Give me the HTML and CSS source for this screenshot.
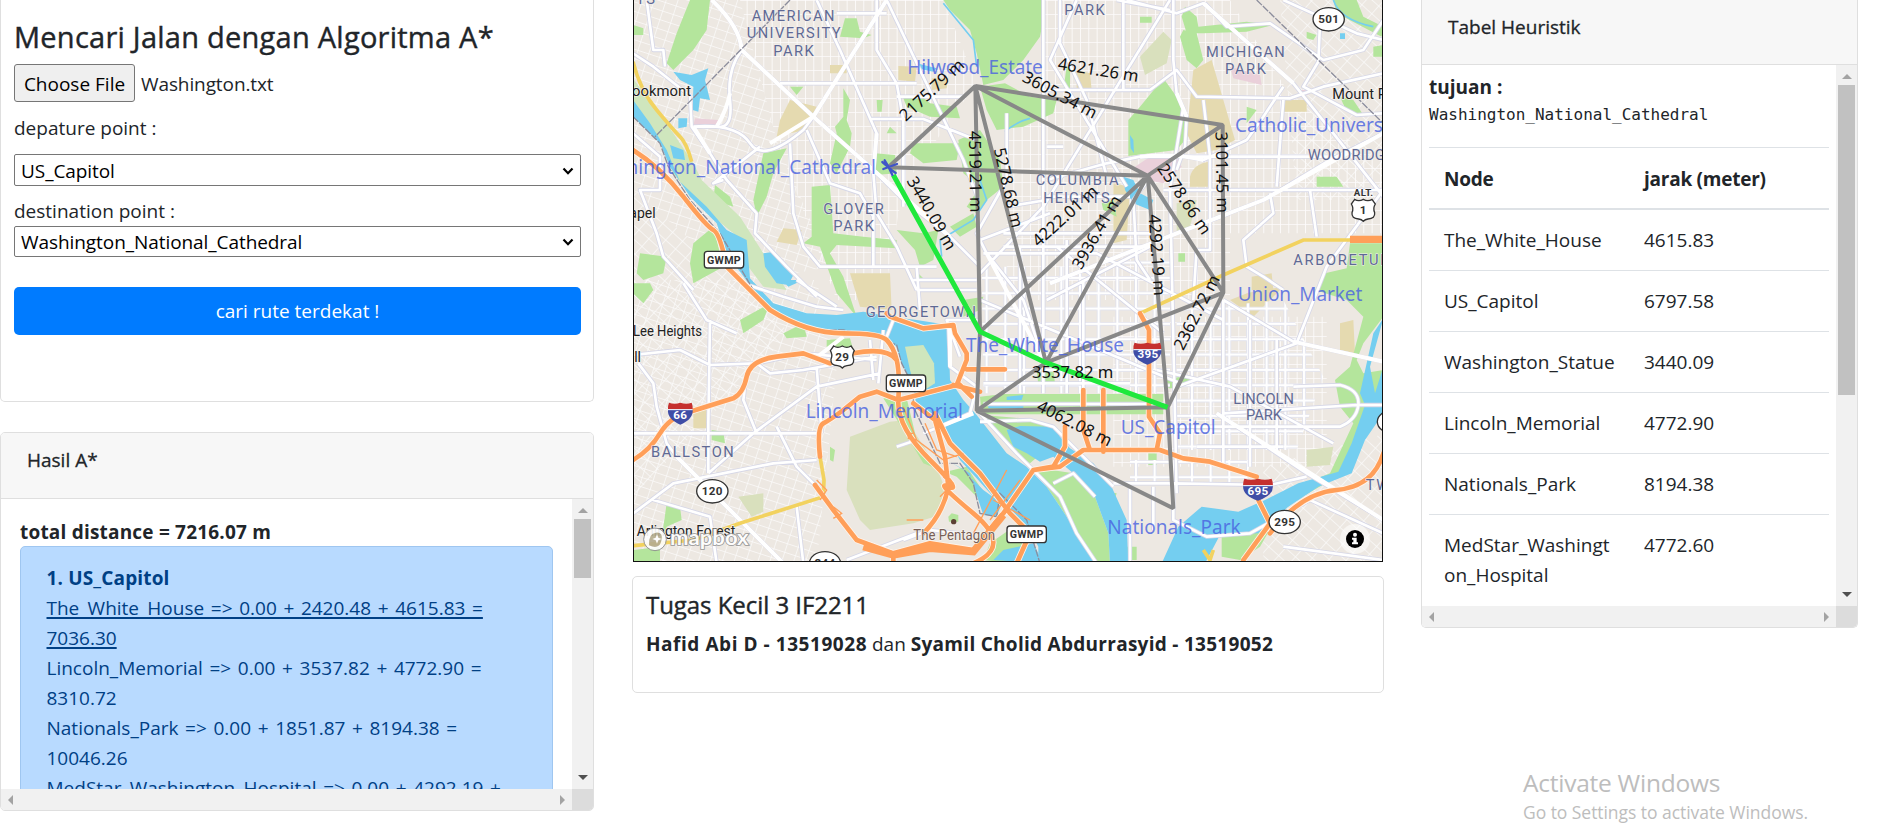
FILE: index.html
```html
<!DOCTYPE html>
<html lang="id">
<head>
<meta charset="utf-8">
<title>Algoritma A*</title>
<link rel="stylesheet" href="styles.css">
</head>
<body>
<main class="page">
  <section class="col col-left">
    <div class="card form-card">
      <h4 class="form-title">Mencari Jalan dengan Algoritma A*</h4>
      <div class="file-row"><span class="file-btn">Choose File</span><span class="file-name">Washington.txt</span></div>
      <div class="field-label">depature point :</div>
      <div class="select select-first"><span>US_Capitol</span><svg class="chev" viewBox="0 0 12 8"><path d="M1.5 1.5 6 6.2 10.5 1.5"/></svg></div>
      <div class="field-label second">destination point :</div>
      <div class="select"><span>Washington_National_Cathedral</span><svg class="chev" viewBox="0 0 12 8"><path d="M1.5 1.5 6 6.2 10.5 1.5"/></svg></div>
      <div class="btn">cari rute terdekat !</div>
    </div>
    <div class="card result-card">
      <div class="card-head result-head">Hasil A*</div>
      <div class="scroll-grid result-grid">
        <div class="view result-view">
          <b class="total">total distance = 7216.07 m</b>
          <div class="alert">
            <b>1. US_Capitol</b><br>
            <u>The_White_House =&gt; 0.00 + 2420.48 + 4615.83 =<br>7036.30</u><br>
            Lincoln_Memorial =&gt; 0.00 + 3537.82 + 4772.90 =<br>8310.72<br>
            Nationals_Park =&gt; 0.00 + 1851.87 + 8194.38 =<br>10046.26<br>
            MedStar_Washington_Hospital =&gt; 0.00 + 4292.19 +
          </div>
        </div>
        <div class="vbar"><i class="up"></i><span class="thumb thumb-short"></span><i class="down"></i></div>
        <div class="hbar"><i class="left"></i><i class="right"></i></div>
        <div class="corner"></div>
      </div>
    </div>
  </section>

  <section class="col col-mid">
    <div class="map">
      <svg class="map-svg" viewBox="12 0 2244 1683" preserveAspectRatio="none">
        <defs>
          <pattern id="g1" width="34" height="27" patternUnits="userSpaceOnUse" patternTransform="rotate(18)"><path d="M0 1H34M1 0V27" stroke="#fbfafa" stroke-width="2.4" fill="none"/></pattern>
          <pattern id="g2" width="25" height="42" patternUnits="userSpaceOnUse"><path d="M0 1H25M1 0V42" stroke="#fdfcfc" stroke-width="3" fill="none"/></pattern>
          <pattern id="g3" width="56" height="46" patternUnits="userSpaceOnUse"><path d="M0 6H56M6 0V46" stroke="#dadbe9" stroke-width="11" fill="none"/><path d="M0 6H56M6 0V46" stroke="#fff" stroke-width="7" fill="none"/></pattern>
          <pattern id="g4" width="31" height="40" patternUnits="userSpaceOnUse" patternTransform="rotate(-48)"><path d="M0 1H31M1 0V40" stroke="#fbfafa" stroke-width="2.4" fill="none"/></pattern>
          <g id="gwmp"><rect x="-59" y="-25" width="118" height="50" rx="9" fill="#fff" stroke="#333" stroke-width="4"/><text class="sh" y="12" textLength="102" lengthAdjust="spacingAndGlyphs">GWMP</text></g>
          <g id="oval"><ellipse rx="47" ry="35" fill="#fff" stroke="#333" stroke-width="4"/></g>
          <g id="us"><path d="M-26-32Q-14-24 0-32Q14-24 26-32L36-18Q28-6 34 8Q36 26 14 27Q5 28 0 34Q-5 28-14 27Q-36 26-34 8Q-28-6-36-18Z" fill="#fff" stroke="#333" stroke-width="4"/></g>
          <g id="is"><path d="M-34-32Q-18-26 0-32Q18-26 34-32Q38-22 37-12H-37Q-38-22-34-32Z" fill="#c5302e"/><path d="M-37-12H37Q40 18 0 34Q-40 18-37-12Z" fill="#3f4da6"/><path d="M-37-11H37" stroke="#fff" stroke-width="3"/></g>
        </defs>

        <rect class="land" x="0" y="0" width="2270" height="1690"/>
        <path fill="url(#g1)" d="M0 0H330L440 420 600 800 330 850 0 560ZM0 840H560L620 1100 560 1690H0Z"/>
        <path fill="url(#g4)" d="M0 560 330 850 480 1000 0 1500ZM1950 0H2270V600H2000ZM1900 1400 2270 1300V1690H1900Z"/>
        <path fill="url(#g2)" d="M330 0H940L1040 250 820 560 760 900H620L440 420ZM1130 300H1800V900H1130ZM1240 0H1800L1990 300 2270 500V700H1240ZM1450 950H2090V1400H1450Z"/>

        <g class="sand">
          <path d="M480 300 560 320 530 390 480 400 440 410 450 360ZM600 195H650V220H600ZM805 198 860 200 855 245 805 240ZM905 235 955 235 950 265 905 270ZM460 685 515 690 500 735 440 725ZM660 820 780 820 785 930 690 920Z"/>
          <path d="M1690 210 1745 180 1815 420 1760 450 1700 460 1670 400ZM1680 530Q1690 490 1740 485L1745 560H1680ZM1340 210 1380 220 1385 270 1340 270ZM1450 550 1500 560 1490 720 1450 730ZM1855 878 1900 870 1960 860 1870 950 1800 900ZM2130 970 2170 960 2175 1060 2130 1050ZM1955 300H2030V335H1955ZM1865 830 1925 820 1930 870 1865 870ZM190 1220H230V1285H190Z"/>
        </g>
        <path class="pink" d="M1515 500 1560 470 1640 475 1655 500 1600 550 1550 540ZM1800 200 1890 225 1895 255 1810 235ZM195 355 265 360 255 380 190 378ZM2015 270H2035V285H2015Z"/>
        <path class="cem" d="M660 1310 780 1265 830 1260 920 1400 950 1480 930 1545 850 1570 720 1590 690 1560 650 1470ZM1530 170 1600 95 1625 120 1610 190 1545 225ZM325 1490 400 1480 400 1535 365 1550ZM1640 610 1700 600 1680 680 1640 700ZM2030 1350 2110 1340 2100 1395 2030 1400Z"/>

        <g class="park">
          <path d="M180 0H240L230 90 190 150 130 210 110 190 140 100ZM9 75 40 85 40 105 9 105ZM645 55 680 55 690 95 725 105 700 115 630 110ZM640 265 660 300 650 360 665 400 660 440 620 520 600 490 620 400 615 380 640 350ZM480 260 520 260 500 285ZM740 300 758 300 755 335 742 335Z"/>
          <path d="M400 460 470 445 430 520 410 590 380 650 370 600ZM255 555 300 590 310 620 250 600ZM190 730 250 680 270 760 280 800 190 850 180 790ZM30 760 110 770 100 820 40 840 20 820ZM9 850H60L70 870 40 910 9 880ZM545 560 600 555 610 700 700 710 800 720V745L620 735 600 760 640 830 680 950 620 880 570 740 520 730 545 710Z"/>
          <path d="M820 295 870 285 900 310 980 320 990 355 900 350 830 320ZM850 430 990 430 980 480 880 490 840 460ZM735 460 795 465 800 520 735 525ZM985 420 1050 390 1110 480 1120 560 1070 600 1040 640 1010 620 1050 560 1000 520ZM940 0H1060L1055 30H1245L1230 110 1180 180 1120 240 1060 255 1040 160 1020 90 960 30ZM1050 0H1245V60H1050ZM1050 260 1125 250 1200 290 1280 300 1270 340 1180 380 1100 390 1070 330ZM800 690 880 700 925 690 910 780 870 800 855 750ZM960 680 1030 640 1040 680 990 710ZM860 815 885 840 860 840ZM770 400 780 380 800 400Z"/>
          <path d="M1495 360 1530 320 1600 235 1640 290 1665 350 1665 420 1640 450 1560 460 1495 468ZM1660 90 1700 100 1720 180 1700 205 1670 180 1650 110ZM1665 20 1700 50 1705 80 1850 65 1930 75 1850 95 1720 100 1670 100 1655 50ZM1530 50H1565V68H1530ZM1850 320 1880 330 1850 370ZM2110 0H2180L2200 50 2260 80 2255 110 2120 40ZM2130 290 2170 300 2200 345 2150 335ZM2060 530 2120 530 2140 560 2060 560ZM2030 95 2060 105 2050 120 2030 115ZM1415 610 1450 600 1460 650 1420 630ZM1645 760H1665V785H1645ZM2230 140 2260 135V170H2230ZM1310 200H1320V270H1300Z"/>
          <path d="M2160 730H2260V950L2200 1030 2180 1080 2200 1120 2260 1110V1200L2180 1320 2120 1430 2000 1500 1920 1560 1880 1600 1900 1540 2000 1460 2100 1420 2170 1270 2130 1220 2115 1140 2160 1100 2200 950 2150 900 2055 870 2085 820 2150 805Z"/>
          <path d="M1058 1245 1180 1255 1280 1290 1280 1320 1200 1390 1160 1360ZM1200 1400 1330 1420 1395 1490 1435 1600 1440 1690 1390 1690 1330 1580 1250 1460ZM1220 1110H1270L1275 1150 1225 1155ZM1610 1140 1650 1130 1690 1130 1650 1165 1615 1165ZM1775 1580 1850 1600 1930 1570 1890 1640 1830 1680 1775 1670ZM1000 950 1050 930 1060 890 1000 900ZM330 960 420 910 400 960 340 1000ZM460 1000 520 970 530 1010 470 1015ZM590 1020 660 1015 670 1050 590 1045ZM245 1290 280 1295 285 1330 245 1320ZM110 1510 150 1520 155 1560 110 1580 90 1640 100 1580ZM9 1650 90 1640 90 1690H9ZM600 1340 615 1350 610 1385 600 1380ZM1060 1680 1080 1630 1180 1560 1210 1600 1150 1690ZM760 1195 830 1195 860 1320 930 1420 1010 1400 1070 1490 1040 1490 980 1430 880 1390 820 1290ZM1490 1640H1520V1680H1490ZM1430 1475 1460 1480 1450 1510 1425 1500ZM1555 1360H1580V1395H1555Z"/>
        </g>

        <g class="wet">
          <path d="M9 235 80 330 130 400 190 490 215 540 330 650 400 760 470 870 400 860 340 780 310 700 200 610 130 520 90 420 9 310Z"/>
        </g>
        <path fill="url(#g3)" d="M1055 800H1430L1620 750V1180H1060ZM1640 930 1960 900 2080 1130 2000 1350H1640ZM1500 1380H1860L1850 1450H1500Z"/>
        <path class="park" d="M1120 1182H1600V1243H1055L1050 1190Z"/>
        <g class="water">
          <path d="M9 350 90 430 120 500 180 590 260 670 290 760 370 870 430 930 530 985 640 1000 760 1015 800 1040 815 1090 850 1160 860 1220 940 1290 990 1380 1090 1490 1150 1540 1200 1590 1225 1640 1225 1690H1395L1330 1580 1250 1460 1190 1400 1130 1360 1040 1245 1000 1200 960 1140 955 975 860 960 780 950 700 935 620 945 530 940 430 910 360 835 350 720 290 690 230 620 150 545 110 450 60 370 9 300Z"/>
          <path d="M960 1385 1020 1420 1045 1500 1060 1545 1100 1550 1115 1510 1060 1470 1000 1410ZM1130 1290 1170 1278 1270 1280 1290 1310 1320 1345 1390 1390 1440 1450 1490 1560 1495 1690H1440L1435 1600 1395 1490 1330 1420 1270 1370 1230 1385 1190 1360 1150 1340ZM1090 1680 1120 1650 1210 1630 1240 1690ZM1075 1215H1180V1225H1075ZM1130 1190 1180 1185 1175 1200H1130Z"/>
          <path d="M2260 955 2230 1000 2190 1180 2205 1215 2165 1330 2125 1415 2005 1450 1905 1500 1825 1535 1715 1520 1645 1580 1595 1690H1725L1770 1605 1885 1600 1975 1520 2065 1460 2165 1420 2205 1320 2260 1240V1100L2235 1180 2220 1100Z"/>
          <path d="M130 215 185 225 235 205 225 240 240 300 210 295 205 335 188 330 190 260 150 240ZM145 355 172 355 170 380 145 385ZM400 760 435 755 490 825 475 855 440 850 405 800ZM120 435 160 450 165 480 130 475ZM455 840 520 840 475 860ZM1480 530 1510 540 1530 580 1570 600 1560 630 1510 610 1485 570ZM1500 405 1510 420 1512 460 1502 445ZM860 190 920 205 910 215 860 205ZM2130 100H2145V117H2130Z"/>
          <path class="creek" d="M940 10 1030 120 1040 200M1050 540 1070 600 1030 660 930 720 935 770M1125 395Q1160 365 1200 355M2110 0Q2130 60 2230 80"/>
        </g>
        <path class="wet" d="M825 1040 880 1035 912 1090 915 1150 860 1185 840 1110Z"/>

        <g class="casing"><g id="rd">
          <path d="M245 0Q330 80 335 150L550 350 730 510 820 600 960 710 1050 800M335 150Q290 210 300 300T260 380H190M190 380Q320 370 360 430T520 390L550 350 650 190 770 0M180 280 185 380 240 460 290 540 380 640 375 700 470 800 560 890M560 0 630 150 740 400 730 520 740 640 800 740 860 870M770 0 870 210 1000 480 1045 600M740 0 740 150 800 250 820 360V620M620 40H770M450 250H860M720 357H880L1040 420M800 290H1000M530 390 600 550 690 580 730 650M480 430 490 640 520 740 570 800H920M730 640V800M570 800H730L860 800 870 930M390 440 250 550 280 540M9 400 90 470 90 570 30 570 80 700 100 770 190 870M9 160 70 200 170 280M50 0 70 150 100 150 105 200M10 1065 150 1050 240 1095 380 1090 520 1060 740 1080M25 1090 70 1150 80 1220 110 1330 140 1370 460 1690M10 1300H250L560 1300M240 960 235 1270 235 1420M235 1420 370 1300 560 1160 750 1120M10 1540 130 1450 430 1390 560 1380M440 1280 500 1400 580 1480M70 1500 240 1550 260 1690M500 1520 520 1690M380 1090 420 1120 520 1110 740 1070M560 1100 575 1300M650 1680 860 1600M160 850 230 960 320 1000M340 850 460 890 560 920 640 930M500 840 620 920M720 1020 730 1140M760 990 745 1150M800 1340 860 1320M380 1300 340 1200 350 1120M850 840H1040M860 870H1040M1050 960H950L990 1070"/>
          <path d="M1240 0V780M1290 0 1290 130 1370 300 1430 530M1340 0 1260 180 1490 560M1480 0V270M1620 0 1240 620 1050 820M1630 0V180L1640 280 1670 350 1665 440 1640 510M1245 270H1560L1640 210 1700 290 1980 295 2080 260 2260 220M1490 0 1640 40 1720 10 1990 250 2110 400 2260 590M1460 0 1620 30M1530 470Q1640 460 1720 480L1850 420 1900 350 1960 260M1250 540 1430 490 1530 470M1300 440 1250 440M1725 10 1790 80 1920 70 2080 180 2200 150 2260 60M1960 0 2180 100 2260 120M2070 70 2065 185 2020 260 2180 345 2260 340M1600 570H2260M1260 850 1640 700 1900 600 2100 480 2260 400M1530 470H2110M1720 300 1740 470 1740 750H1700L1690 900M1640 700 1800 640M1920 580 1930 640 1840 720 1850 800 1900 830 1960 870M1660 320 1620 570M1960 300 1940 560M2040 570 2060 710M2260 570 2090 800 2000 1030 1640 1160M1555 540 1510 600 1520 780 1560 840M1250 590H1500M1130 620 1250 600M1050 720 1260 640M1060 760H1400L1780 960M1050 900 1650 1150M1280 740 1600 1000M1560 740 1250 900M1620 560 1640 1480M1130 340 1130 540 1040 700 1070 760 1180 900 1240 1080M1170 740V1180M1240 720V1180M1310 720V1180M1360 840V1180M1120 700H1560M1120 740H1560"/>
          <path d="M1780 900V1400M1860 960V1400M1940 1020V1350M1580 1110 1800 1160 2110 1330M1760 1240 1880 1320 2030 1420 2260 1560M1640 1280H2130Q2180 1260 2185 1215T2130 1155L1990 1160M1780 1240 2180 1215H2260M1780 900 1990 1025 2260 1085M1450 1450H1630L1920 1455 2030 1430M1050 1240 1160 1360 1200 1400 1290 1490 1340 1600 1400 1690M1050 1265 1200 1260 1270 1280 1330 1340 1450 1460M1630 1450V1560L1730 1610 1860 1600 2040 1500M1500 1460V1690M1570 1460V1590M1960 1640 2260 1680M2040 1500 2260 1600M880 1300 930 1280 1020 1240 1040 1160 960 1100 955 970M1060 1150H1500M820 1620 900 1590 990 1600M1270 1450 1330 1420 1395 1490M770 1010 790 960M1700 1340H1960M1060 1212H1600"/>
        </g></g>
        <use href="#rd" class="road-fill"/>
        <g class="major"><path d="M245 0Q330 80 335 150L550 350 730 510 960 710M770 0 650 190 550 350M300 280Q290 330 260 380M190 380 240 460M420 430 550 350M740 400 730 520M1640 280 1670 350M1530 470Q1640 460 1720 480M1720 10 1990 250M1260 850 1640 700 1900 600 2260 400M2260 1085 1990 1025M1760 1240 2260 1560M140 1370 460 1690M960 970V1100M930 1280 1030 1240M1070 760 1240 1080M550 1080 640 1010"/></g>

        <path class="rail" d="M480 0 75 410M1880 0 2260 370M9 350 90 430 115 500 180 600 270 700 370 870 450 950 530 990 640 990 740 1010 800 1035 815 1090 850 1160 850 1220 930 1390 990 1390 1030 1450 1050 1540 1100 1550 1110 1480 1190 1560 1230 1690"/>

        <g class="yellow"><path d="M9 185Q30 270 80 330T150 410 185 485M9 1637 190 1620 330 1570 580 1490 582 1440 570 1370M1530 940 1780 825 2020 720H2160M1720 1650 1740 1680 1750 1650"/></g>
        <g class="hwy-halo"><path id="hw" d="M9 450Q90 500 160 590T250 690 290 800L420 930Q530 1000 640 1000T770 1020 800 1080 805 1200 900 1380 955 1460 1030 1540 1030 1690M9 1380Q60 1350 90 1300T180 1235L310 1195Q340 1180 350 1130T440 1070L520 1060 600 1090M670 1060Q770 1040 800 1080M570 1370Q560 1280 580 1270T640 1230L690 1190 740 1175 805 1200 980 1155 1010 1080 1010 1060 975 1000 970 975 880 985 780 950 770 940M1010 1108H1125M970 1155 1050 1175M985 1150 1025 1190M555 1455 610 1530 680 1620 790 1660 900 1630 1030 1650 1120 1540 1210 1410 1290 1400 1360 1350 1590 1350 1660 1375 1740 1385 1880 1430M880 1600Q940 1540 955 1460L945 1370 915 1260 850 1210M915 1240 960 1330 1050 1420 1140 1540 1200 1600 1160 1690M1530 940 1557 990V1250L1590 1300 1580 1350M1360 1170V1290L1378 1345M1420 1170V1355M1305 1280V1340L1270 1400 1210 1410M1885 1500 1920 1570 1840 1680M1920 1600Q2010 1480 2120 1470T2260 1360M790 1660V1690"/></g>
        <use href="#hw" class="hwy"/>
        <path class="orange-thick" d="M700 1640 790 1665 900 1645 1030 1655 1120 1545M2160 718H2260"/>
        <path class="ramp" d="M850 1300H835V1315L860 1320M820 1220 860 1320 940 1380 1000 1360M885 1270 920 1350 980 1370M940 1430 970 1450 930 1490M560 1440 590 1470 570 1500M610 1520 635 1540 610 1555M880 1560H830M1090 1500 1200 1560M1130 1410 1030 1600M1170 1440 1080 1560"/>

        <g class="area">
          <text x="80" y="12" text-anchor="end">HEIGHTS</text>
          <text x="365" y="62" textLength="253">AMERICAN</text><text x="350" y="115" textLength="287">UNIVERSITY</text><text x="430" y="168" textLength="126">PARK</text>
          <text x="580" y="642" textLength="186">GLOVER</text><text x="610" y="694" textLength="127">PARK</text>
          <text x="1303" y="45" textLength="126">PARK</text>
          <text x="1728" y="170" textLength="241">MICHIGAN</text><text x="1785" y="222" textLength="128">PARK</text>
          <text x="2033" y="480" textLength="262">WOODRIDGE</text><text x="1990" y="796">ARBORETUM</text>
          <text x="1217" y="555" textLength="254">COLUMBIA</text><text x="1240" y="608" textLength="204">HEIGHTS</text>
          <text x="707" y="951" textLength="336">GEORGETOWN</text><text x="63" y="1371" textLength="253">BALLSTON</text>
          <text x="1810" y="1212" textLength="187">LINCOLN</text><text x="1848" y="1260" textLength="113">PARK</text><text x="2207" y="1470">TWINING</text>
        </g>
        <g class="town">
          <text x="183" y="287" text-anchor="end" textLength="219" lengthAdjust="spacingAndGlyphs">Brookmont</text><text x="77" y="655" text-anchor="end">Chapel</text>
          <text x="9" y="1008" textLength="207" lengthAdjust="spacingAndGlyphs">Lee Heights</text><text x="33" y="1085" text-anchor="end">Falls Hill</text>
          <text x="20" y="1608" textLength="296" lengthAdjust="spacingAndGlyphs">Arlington Forest</text><text x="2107" y="296" textLength="270" lengthAdjust="spacingAndGlyphs">Mount Rainier</text>
          <text x="850" y="1620" class="brown" textLength="245" lengthAdjust="spacingAndGlyphs">The Pentagon</text>
        </g>
        <path class="park" d="M955 1550 965 1540 985 1545 985 1565H957Z"/><circle cx="971" cy="1565" r="8" fill="#5c4033"/>

        <use href="#gwmp" x="282" y="779"/><use href="#gwmp" x="828" y="1150"/><use href="#gwmp" x="1190" y="1603"/>
        <use href="#oval" x="2096" y="58"/><text class="sh" x="2096" y="70">501</text>
        <use href="#oval" x="247" y="1474"/><text class="sh" x="247" y="1486">120</text>
        <use href="#oval" x="1964" y="1566"/><text class="sh" x="1964" y="1578">295</text>
        <use href="#oval" x="585" y="1690"/><text class="sh" x="585" y="1702">244</text>
        <use href="#oval" x="2289" y="1265"/>
        <use href="#us" x="637" y="1070"/><text class="sh" x="637" y="1083">29</text>
        <use href="#us" x="2200" y="630"/><text class="sh" x="2200" y="642">1</text><text class="sh alt" x="2201" y="587">ALT.</text>
        <use href="#is" x="151" y="1240"/><text class="sh w" x="151" y="1256">66</text>
        <g transform="translate(1884 1468) scale(1.2 1)"><use href="#is"/></g><text class="sh w" x="1884" y="1485">695</text>

        <path class="edge" d="M1036 258 775 502 1553 527ZM1036 258 1050 995 1040 1232 1613 1222 1630 1525 1040 1232M1036 258 1248 1088 1780 878 1778 375 1036 258M1778 375 1553 527 1780 878 1613 1222 1553 527 1050 995M1553 527 1248 1088 1040 1232"/>
        <g transform="translate(1552 1060) scale(1.13 1)"><use href="#is"/></g>
        <text class="sh w" x="1554" y="1075">395</text>
        <path class="route" d="M790 525 1050 995 1248 1088 1613 1222"/>
        <path class="plane" d="M757 486 786 511M801 492 760 507M786 511 797 519M777 503 787 525M764 481 777 503"/>

        <g class="node">
          <text x="832" y="222" textLength="406">Hilwood_Estate</text><text x="738" y="522" text-anchor="end">Washington_National_Cathedral</text>
          <text x="1815" y="397">Catholic_University</text><text x="1823" y="902" textLength="374">Union_Market</text>
          <text x="1008" y="1055" textLength="474">The_White_House</text><text x="527" y="1255" textLength="472">Lincoln_Memorial</text>
          <text x="1472" y="1302" textLength="285">US_Capitol</text><text x="1432" y="1602" textLength="400">Nationals_Park</text>
        </g>
        <g class="dist">
          <text transform="translate(905 270) rotate(-43)" y="17">2175.79 m</text>
          <text transform="translate(905 640) rotate(60)" y="17">3440.09 m</text>
          <text transform="translate(1036 515) rotate(89)" y="17">4519.21 m</text>
          <text transform="translate(1135 563) rotate(77)" y="17">5278.68 m</text>
          <text transform="translate(1405 210) rotate(9)" y="17">4621.26 m</text>
          <text transform="translate(1290 285) rotate(28)" y="17">3605.34 m</text>
          <text transform="translate(1776 517) rotate(89)" y="17">3101.45 m</text>
          <text transform="translate(1663 597) rotate(56)" y="17">2578.66 m</text>
          <text transform="translate(1305 648) rotate(-42)" y="17">4222.01 m</text>
          <text transform="translate(1400 697) rotate(-60)" y="17">3936.41 m</text>
          <text transform="translate(1581 765) rotate(86)" y="17">4292.19 m</text>
          <text transform="translate(1700 937) rotate(-63)" y="17">2362.72 m</text>
          <text transform="translate(1328 1118)" y="17">3537.82 m</text>
          <text transform="translate(1334 1270) rotate(27)" y="17">4062.08 m</text>
        </g>
        <g class="logo"><circle cx="75" cy="1618" r="34"/><path d="M57 1636Q55 1600 78 1598T94 1623 57 1636Z" class="hole"/><path d="M81 1603 85 1613 95 1617 85 1621 81 1631 77 1621 67 1617 77 1613Z" class="star"/><text x="120" y="1636" textLength="236" lengthAdjust="spacingAndGlyphs">mapbox</text></g>
        <circle cx="2175" cy="1617" r="45" fill="#fff" opacity=".55"/><circle cx="2175" cy="1617" r="27"/><circle cx="2175" cy="1604" r="6" fill="#fff"/><path d="M2166 1613H2180V1627H2184V1633H2166V1627H2170V1619H2166Z" fill="#fff"/>
      </svg>
    </div>
    <div class="card team-card">
      <h5 class="team-title">Tugas Kecil 3 IF2211</h5>
      <div class="team"><b class="first">Hafid Abi D - 13519028</b> dan <b>Syamil Cholid Abdurrasyid - 13519052</b></div>
    </div>
  </section>

  <section class="col col-right">
    <div class="card table-card">
      <div class="card-head table-head">Tabel Heuristik</div>
      <div class="scroll-grid table-grid">
        <div class="view table-view">
          <b class="goal">tujuan :</b>
          <code class="goal-name">Washington_National_Cathedral</code>
          <div class="row head"><b>Node</b><b>jarak (meter)</b></div>
          <div class="row"><span>The_White_House</span><span>4615.83</span></div>
          <div class="row"><span>US_Capitol</span><span>6797.58</span></div>
          <div class="row"><span>Washington_Statue</span><span>3440.09</span></div>
          <div class="row"><span>Lincoln_Memorial</span><span>4772.90</span></div>
          <div class="row"><span>Nationals_Park</span><span>8194.38</span></div>
          <div class="row last"><span>MedStar_Washingt<br>on_Hospital</span><span>4772.60</span></div>
        </div>
        <div class="vbar"><i class="up"></i><span class="thumb thumb-long"></span><i class="down"></i></div>
        <div class="hbar"><i class="left"></i><i class="right"></i></div>
        <div class="corner"></div>
      </div>
    </div>
  </section>
</main>
<div class="watermark"><div class="wm-title">Activate Windows</div><div class="wm-text">Go to Settings to activate Windows.</div></div>
</body>
</html>
```
FILE: styles.css
```css
* { box-sizing: border-box; }
body { margin: 0; height: 835px; overflow: hidden; background: #fff; color: #212529; font: 19px/30px "Open Sans", "Noto Sans", sans-serif; }
.page { display: flex; align-items: flex-start; }
.col-left { width: 594px; }
.col-mid { width: 752px; margin-left: 38px; }
.col-right { width: 437px; margin-left: 37px; }
.card { border: 1px solid #dfdfdf; border-radius: 5px; background: #fff; overflow: hidden; white-space: nowrap; }
b { font-weight: 700; }

.form-card { height: 402px; border-top: 0; border-radius: 0 0 5px 5px; padding: 19px 12px 0 13px; }
.form-title { margin: 0; font-size: 29px; font-weight: 500; line-height: 36px; letter-spacing: .25px; -webkit-text-stroke: .4px #212529; }
.file-row { display: flex; align-items: center; gap: 6px; height: 38px; margin-top: 9px; }
.file-btn { width: 121px; height: 38px; line-height: 38px; text-align: center; border: 1px solid #767676; border-radius: 3px; background: #efefef; color: #000; }
.file-name { padding-top: 1px; letter-spacing: -.1px; }
.field-label { margin-top: 11px; }
.field-label.second { margin-top: 10px; }
.select { display: flex; align-items: center; justify-content: space-between; height: 31px; padding: 1px 6px 0; border: 1px solid #767676; border-radius: 2px; color: #000; letter-spacing: -.07px; }
.select-first { height: 32px; margin-top: 11px; }
.chev { width: 12px; height: 8px; fill: none; stroke: #000; stroke-width: 2.2; }
.btn { height: 48px; margin-top: 30px; border-radius: 5px; background: #007bff; color: #fff; line-height: 49px; text-align: center; }

.card-head { background: #f7f7f7; border-bottom: 1px solid #dfdfdf; -webkit-text-stroke: .3px #212529; }
.result-card { margin-top: 30px; height: 379px; }
.result-head { height: 66px; padding: 12px 26px; line-height: 30px; }
.scroll-grid { display: grid; grid-template-rows: 1fr 21px; }
.result-grid { height: 311px; grid-template-columns: 1fr 21px; }
.table-grid { height: 562px; grid-template-columns: 1fr 21px; }
.view { overflow: hidden; min-width: 0; }
.result-view { padding: 18px 19px 0 19px; }
.total { display: block; letter-spacing: .2px; }
.alert { height: 400px; margin-top: -1px; padding: 16px 25.5px; border: 1px solid #9fc6f0; border-radius: 5px; background: #b8daff; color: #004085; word-spacing: 1.7px; }
.alert b { letter-spacing: .15px; word-spacing: 0; }
.alert u { text-underline-offset: 2px; text-decoration-thickness: 2px; }
.vbar { display: flex; flex-direction: column; align-items: center; background: #f1f1f1; }
.hbar { display: flex; align-items: center; justify-content: space-between; padding: 0 8px; background: #f1f1f1; }
.corner { background: #dcdcdc; }
.thumb { width: 17px; margin-top: 6px; background: #c1c1c1; }
.thumb-short { height: 59px; }
.thumb-long { height: 310px; }
.vbar i, .hbar i { width: 0; height: 0; border: 5px solid transparent; }
.up { margin-top: 4px; border-bottom-color: #a3a3a3 !important; }
.down { margin-top: auto; margin-bottom: 4px; border-top-color: #505050 !important; }
.hbar .left { margin-left: -6px; border-right-color: #a3a3a3; }
.hbar .right { margin-right: -6px; border-left-color: #a3a3a3; }

.map { height: 562px; margin: 0 1px; border: 1px solid #111; border-top: 0; overflow: hidden; }
.map-svg { display: block; width: 748px; height: 561px; }
.land { fill: #ede8e2; }
.sand { fill: #e5dab0; }
.pink { fill: #ead0da; }
.cem { fill: #d9e0bd; }
.park { fill: #b4e59c; }
.wet { fill: #cfe6bd; }
.water { fill: #74cef0; }
.creek { fill: none; stroke: #74cef0; stroke-width: 5; }
.casing { fill: none; stroke: #d6d7e7; stroke-width: 13; stroke-linejoin: round; }
.road-fill { fill: none; stroke: #fff; stroke-width: 8; stroke-linejoin: round; }
.major { fill: none; stroke: #fff; stroke-width: 12; stroke-linejoin: round; }
.rail { fill: none; stroke: #8c8d9c; stroke-width: 4; stroke-dasharray: 22 4; }
.yellow { fill: none; stroke: #f2d25f; stroke-width: 11; }
.hwy { fill: none; stroke: #ff9f59; stroke-width: 14; stroke-linejoin: round; stroke-linecap: round; }
.hwy-halo { fill: none; stroke: #fff3ea; stroke-width: 19; stroke-linejoin: round; }
.orange-thick { fill: none; stroke: #ff9f59; stroke-width: 22; }
.ramp { fill: none; stroke: #ff9f59; stroke-width: 4; }
.edge { fill: none; stroke: #888; stroke-width: 12; stroke-linejoin: bevel; }
.route { fill: none; stroke: #1fe83c; stroke-width: 15; }
.plane { fill: none; stroke: #4054c8; stroke-width: 7; stroke-linecap: round; }
.area { font: 400 44px Roboto, sans-serif; fill: #5f6994; letter-spacing: 5px; stroke: #f3f0ee; stroke-width: 3; paint-order: stroke; }
.town { font: 400 42px Roboto, sans-serif; fill: #222; stroke: #f6f3f0; stroke-width: 4; paint-order: stroke; }
.brown { fill: #785f56; }
.sh { font: 700 35px Roboto, sans-serif; fill: #333; text-anchor: middle; letter-spacing: 1px; }
.alt { font-size: 29px; stroke: #fff; stroke-width: 3; paint-order: stroke; }
.w { fill: #fff; }
.node { font: 57px "Noto Sans", sans-serif; fill: #4a63e0; fill-opacity: .82; }
.dist { font: 50px "Noto Sans", sans-serif; fill: #111; text-anchor: middle; }
.logo { fill: #fff; stroke: #8c8c8c; stroke-width: 3; opacity: .9; }
.logo text { font: 700 64px Lato, sans-serif; paint-order: stroke; stroke-width: 5; }
.logo .hole { fill: #b5ad8f; stroke: none; }
.logo .star { stroke: none; }

.team-card { height: 117px; margin-top: 14px; padding: 13px 13px; }
.team-title { margin: 0; font-size: 24px; font-weight: 400; line-height: 30px; letter-spacing: -.05px; -webkit-text-stroke: .4px #212529; }
.team { margin-top: 9px; }
.team b { letter-spacing: .28px; }
.team .first { letter-spacing: .55px; }

.table-card { height: 628px; border-top: 0; border-radius: 0 0 5px 5px; }
.table-head { height: 65px; padding: 12px 26px; }
.table-view { padding: 7px 7px 0 7px; }
.goal { display: block; height: 30px; }
.goal-name { display: block; height: 45px; font: 16px/26px "DejaVu Sans Mono", monospace; }
.row { display: grid; grid-template-columns: 200px 1fr; height: 61px; padding: 15px; border-top: 1px solid #dee2e6; }
.row.head { height: 62px; padding-top: 16px; border-bottom: 1px solid #dee2e6; letter-spacing: -.25px; }
.row.last { height: 91px; }
.watermark { position: absolute; left: 1523px; top: 765px; color: #bdbdbd; white-space: nowrap; }
.wm-title { font-size: 24.5px; line-height: 35px; letter-spacing: -.25px; }
.wm-text { font-size: 17.5px; line-height: 24px; letter-spacing: -.05px; }
```
